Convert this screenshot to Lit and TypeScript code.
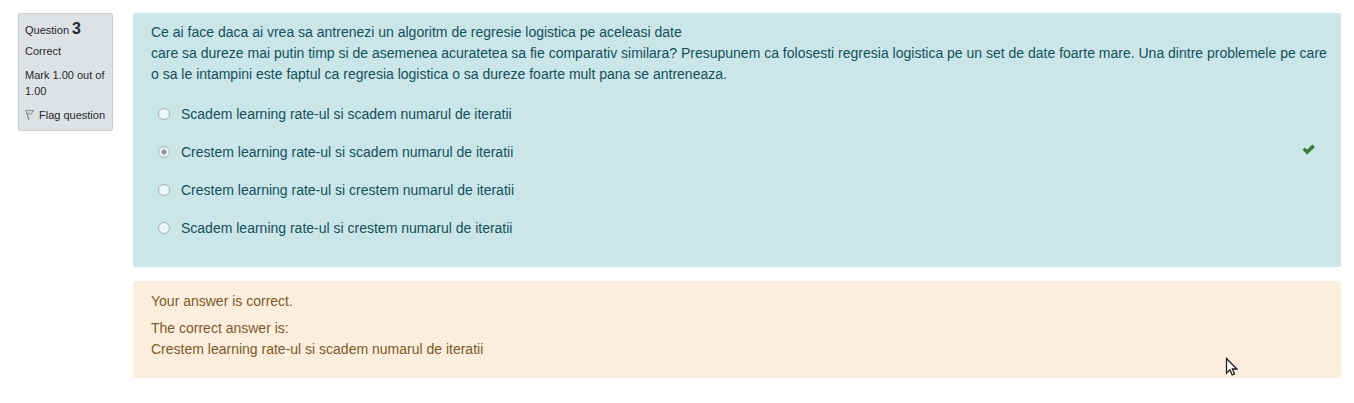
import { LitElement, html, css, svg } from "lit";
import { customElement, property } from "lit/decorators.js";

const FLAG = svg`<path d="M1 1.5 4 11" stroke="#85898d" stroke-width="1.2" fill="none"/><path d="M1 2C3 .5 5 2.200 8.500 1.500 7.500 3 7 4 6.500 5 5 5.500 4 4.500 2.600 5.500Z" stroke="#85898d" stroke-width="1" fill="#d3d7da"/>`;
const CHECK = svg`<path d="M.5 5.800 2.900 3.600 5.200 5.800 10.500.6 12.900 2.900 5.200 10.400Z" fill="#357a32"/>`;

@customElement("question-info")
class QuestionInfo extends LitElement {
  @property({ type: Number }) number = 1;
  @property() state = "";
  @property() grade = "";

  static styles = css`
    :host {
      display: block;
      box-sizing: border-box;
      width: 95px;
      flex: none;
      padding: 6px 4px 7px 6px;
      border: 1px solid #cbd0d4;
      border-radius: 2px;
      background: #dee2e5;
      color: #25292d;
      font-size: 11px;
      line-height: 16px;
    }
    .title {
      margin: 0;
      font-size: 11px;
      font-weight: 400;
      line-height: 18px;
    }
    .number {
      font-size: 16px;
      font-weight: 700;
    }
    .state {
      margin-top: 4px;
    }
    .grade {
      margin-top: 8px;
    }
    .flag {
      display: flex;
      align-items: center;
      gap: 5px;
      margin-top: 8px;
      padding: 0;
      border: 0;
      background: none;
      color: inherit;
      font: inherit;
      white-space: nowrap;
      cursor: pointer;
    }
    .flag svg {
      flex: none;
    }
  `;

  render() {
    return html`
      <h3 class="title">Question <span class="number">${this.number}</span></h3>
      <div class="state">${this.state}</div>
      <div class="grade">${this.grade}</div>
      <button class="flag" type="button">
        <svg width="9" height="12" viewBox="0 0 9 12" aria-hidden="true">${FLAG}</svg>
        Flag question
      </button>
    `;
  }
}

interface Option {
  text: string;
  chosen: boolean;
}

@customElement("app-root")
class AppRoot extends LitElement {
  private options: Option[] = [
    { text: "Scadem learning rate-ul si scadem numarul de iteratii", chosen: false },
    { text: "Crestem learning rate-ul si scadem numarul de iteratii", chosen: true },
    { text: "Crestem learning rate-ul si crestem numarul de iteratii", chosen: false },
    { text: "Scadem learning rate-ul si crestem numarul de iteratii", chosen: false },
  ];

  static styles = css`
    :host {
      display: block;
      position: relative;
      padding: 13px 13px 25px 18px;
      background: #fff;
      font-family: "Liberation Sans", Arial, sans-serif;
      font-size: 14px;
      line-height: 21px;
    }
    .question {
      display: flex;
      align-items: flex-start;
      gap: 20px;
    }
    .content {
      flex: 1;
      min-width: 0;
    }
    .formulation {
      padding: 9px 8px 20px 18px;
      border-radius: 3px;
      background: #cbe6e9;
      color: #12505a;
    }
    .text {
      margin: 0;
    }
    .options {
      margin: 10px 0 0;
      padding: 0;
      border: 0;
    }
    .option {
      display: flex;
      align-items: center;
      height: 38px;
      padding: 0 18px 0 7px;
    }
    .option label {
      padding-left: 11px;
    }
    .option input {
      appearance: none;
      box-sizing: border-box;
      flex: none;
      width: 12px;
      height: 12px;
      margin: 0;
      border: 1px solid #a5b3b8;
      border-radius: 50%;
      background: #e9f5f7;
    }
    .option input:checked {
      background: radial-gradient(circle, #8e8f98 0 2px, #e9f2f4 3px);
    }
    .check {
      margin: 0 0 6px auto;
    }
    .feedback {
      margin-top: 14px;
      padding: 10px 18px;
      padding-bottom: 18px;
      border-radius: 3px;
      background: #fceedc;
      color: #7d5a29;
    }
    .feedback p {
      margin: 0 0 6px;
    }
    .feedback p:last-child {
      margin: 0;
    }
    .pointer {
      position: absolute;
      left: 1225px;
      top: 357px;
      pointer-events: none;
    }
  `;

  render() {
    return html`
      <main class="question">
        <question-info number="3" state="Correct" grade="Mark 1.00 out of 1.00"></question-info>
        <div class="content">
          <section class="formulation">
            <p class="text" id="question-text">
              Ce ai face daca ai vrea sa antrenezi un algoritm de regresie logistica pe aceleasi date<br />
              care sa dureze mai putin timp si de asemenea acuratetea sa fie comparativ similara? Presupunem ca
              folosesti regresia logistica pe un set de date foarte mare. Una dintre problemele pe care o sa le
              intampini este faptul ca regresia logistica o sa dureze foarte mult pana se antreneaza.
            </p>
            <fieldset class="options" aria-labelledby="question-text">
              ${this.options.map(
                (option, i) => html`
                  <div class="option">
                    <input type="radio" name="answer" id="answer${i}" disabled ?checked=${option.chosen} />
                    <label for="answer${i}">${option.text}</label>
                    ${option.chosen
                      ? html`<svg class="check" width="13" height="11" viewBox="0 0 13 11" role="img" aria-label="Correct">${CHECK}</svg>`
                      : null}
                  </div>
                `
              )}
            </fieldset>
          </section>
          <section class="feedback">
            <p>Your answer is correct.</p>
            <p>The correct answer is:<br />Crestem learning rate-ul si scadem numarul de iteratii</p>
          </section>
        </div>
      </main>
      <svg class="pointer" width="13" height="20" viewBox="0 0 13 20" aria-hidden="true">
        <path d="M1.500 1.500V16L5 12.800 7.200 18 9.500 17 7.400 12H11.800Z" fill="#fff" stroke="#1d1d1d" stroke-width="1.300" />
      </svg>
    `;
  }
}
